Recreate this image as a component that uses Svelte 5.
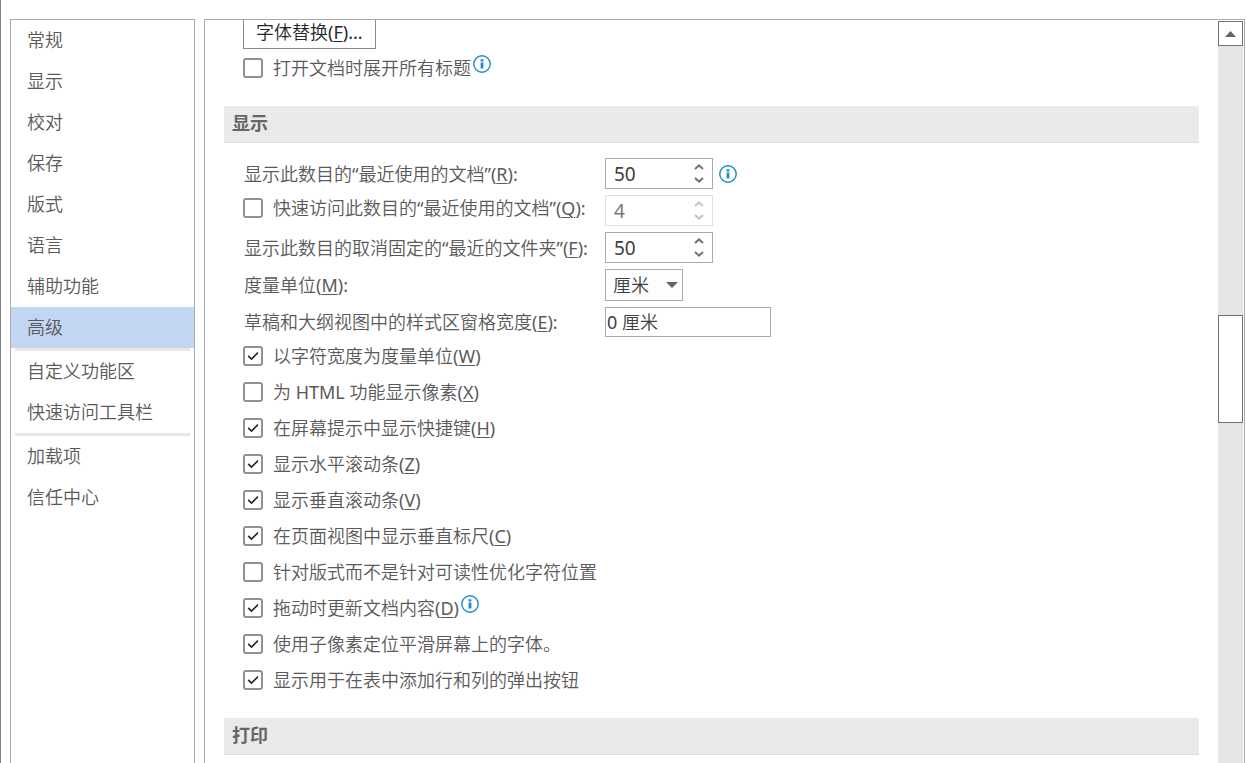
<script>
	const navGroups = [
		['常规', '显示', '校对', '保存', '版式', '语言', '辅助功能', '高级'],
		['自定义功能区', '快速访问工具栏'],
		['加载项', '信任中心']
	];

	let active = $state('高级');
	let expandHeadings = $state(false);
	let recentDocs = $state(50);
	let quickAccess = $state(false);
	let quickDocs = $state(4);
	let recentFolders = $state(50);
	let unit = $state('厘米');
	let paneWidth = $state('0 厘米');

	let options = $state([
		{ text: '以字符宽度为度量单位', key: 'W', checked: true },
		{ text: '为 HTML 功能显示像素', key: 'X', checked: false },
		{ text: '在屏幕提示中显示快捷键', key: 'H', checked: true },
		{ text: '显示水平滚动条', key: 'Z', checked: true },
		{ text: '显示垂直滚动条', key: 'V', checked: true },
		{ text: '在页面视图中显示垂直标尺', key: 'C', checked: true },
		{ text: '针对版式而不是针对可读性优化字符位置', checked: false },
		{ text: '拖动时更新文档内容', key: 'D', checked: true, info: true },
		{ text: '使用子像素定位平滑屏幕上的字体。', checked: true },
		{ text: '显示用于在表中添加行和列的弹出按钮', checked: true }
	]);

	// Scroll position and visible share, in percent of the track
	const scroll = { top: 37.5, size: 15.1 };
</script>

{#snippet infoIcon()}
	<svg class="info" viewBox="0 0 18 18" width="18" height="18" role="img" aria-label="信息">
		<circle cx="9" cy="9" r="8.2" fill="#fff" stroke="#1e8bcd" stroke-width="1.4" />
		<path d="M7.6 4.2h2.8v2.2H7.6zM7.6 7.6h2.8v6H7.6z" fill="#1e8bcd" />
	</svg>
{/snippet}

{#snippet checkMark()}
	<svg class="mark" viewBox="0 0 20 20" width="20" height="20" aria-hidden="true">
		<path d="M5.2 9.8l3.3 3.3 6.4-6.4" fill="none" stroke="#262626" stroke-width="1.7" />
	</svg>
{/snippet}

{#snippet spinner(id, value, disabled, set)}
	<div class="spinner" class:disabled>
		<input {id} type="number" min="0" {value} {disabled} oninput={(e) => set(+e.target.value)} />
		<div class="arrows">
			<button aria-label="增加" {disabled} onclick={() => set(value + 1)}>
				<svg viewBox="0 0 10 6" width="10" height="6"><path d="M1 5l4-3.6L9 5" /></svg>
			</button>
			<button aria-label="减少" {disabled} onclick={() => set(Math.max(0, value - 1))}>
				<svg viewBox="0 0 10 6" width="10" height="6"><path d="M1 1l4 3.6L9 1" /></svg>
			</button>
		</div>
	</div>
{/snippet}

<div class="dialog">
	<nav class="sidebar">
		{#each navGroups as group}
			<div class="group">
				{#each group as item}
					<button class="nav-item" class:active={item === active} onclick={() => (active = item)}>
						{item}
					</button>
				{/each}
			</div>
		{/each}
	</nav>

	<div class="panel">
		<main class="content">
			<button class="font-button">字体替换(<u>F</u>)...</button>
			<div class="check-row">
				<label>
					<span class="box">
						<input type="checkbox" bind:checked={expandHeadings} />
						{@render checkMark()}
					</span>
					<span>打开文档时展开所有标题</span>
				</label>
				<span class="raised">{@render infoIcon()}</span>
			</div>

			<h2>显示</h2>
			<div class="fields">
				<label for="recent-docs">显示此数目的“最近使用的文档”(<u>R</u>):</label>
				<div class="control">
					{@render spinner('recent-docs', recentDocs, false, (v) => (recentDocs = v))}
					{@render infoIcon()}
				</div>

				<label class="with-box">
					<span class="box">
						<input type="checkbox" bind:checked={quickAccess} />
						{@render checkMark()}
					</span>
					<span>快速访问此数目的“最近使用的文档”(<u>Q</u>):</span>
				</label>
				<div class="control">
					{@render spinner('quick-docs', quickDocs, !quickAccess, (v) => (quickDocs = v))}
				</div>

				<label for="recent-folders">显示此数目的取消固定的“最近的文件夹”(<u>F</u>):</label>
				<div class="control">
					{@render spinner('recent-folders', recentFolders, false, (v) => (recentFolders = v))}
				</div>

				<label for="unit">度量单位(<u>M</u>):</label>
				<div class="control">
					<div class="select">
						<select id="unit" bind:value={unit}>
							<option>厘米</option>
							<option>英寸</option>
							<option>毫米</option>
							<option>磅</option>
						</select>
						<svg viewBox="0 0 12 6" width="12" height="6" aria-hidden="true">
							<path d="M0 0h12L6 6z" fill="#666" />
						</svg>
					</div>
				</div>

				<label for="pane-width">草稿和大纲视图中的样式区窗格宽度(<u>E</u>):</label>
				<div class="control">
					<input id="pane-width" class="text" type="text" bind:value={paneWidth} />
				</div>
			</div>

			{#each options as option}
				<div class="check-row">
					<label>
						<span class="box">
							<input type="checkbox" bind:checked={option.checked} />
							{@render checkMark()}
						</span>
						<span>{option.text}{#if option.key}(<u>{option.key}</u>){/if}</span>
					</label>
					{#if option.info}
						<span class="raised">{@render infoIcon()}</span>
					{/if}
				</div>
			{/each}

			<h2>打印</h2>
		</main>

		<div class="scrollbar">
			<button class="scroll-up" aria-label="向上滚动">
				<svg viewBox="0 0 11 6" width="11" height="6"><path d="M0 6h11L5.5 0z" fill="#666" /></svg>
			</button>
			<div class="track">
				<div class="thumb" style="top: {scroll.top}%; height: {scroll.size}%"></div>
			</div>
		</div>
	</div>
</div>

<style>
	:global(body) {
		background: #fff;
	}

	.dialog {
		display: flex;
		gap: 9px;
		height: 100vh;
		box-sizing: border-box;
		padding: 19px 1px 0 9px;
		border-left: 1px solid #808080;
		overflow: hidden;
		color: #5a5a5a;
		font-family: 'Noto Sans', 'Noto Sans CJK SC DemiLight', 'Noto Sans CJK SC', sans-serif;
		font-size: 18px;
		line-height: 24px;
	}

	button,
	input,
	select {
		margin: 0;
		padding: 0;
		border: 0;
		border-radius: 0;
		background: none;
		color: inherit;
		font: inherit;
	}

	u {
		text-decoration-thickness: 1px;
		text-underline-offset: 2px;
	}

	svg {
		display: block;
		flex: none;
	}

	.sidebar {
		flex: none;
		width: 183px;
		border: 1px solid #ababab;
		border-bottom: 0;
	}

	.group + .group::before {
		content: '';
		display: block;
		height: 3px;
		margin: 0 4px;
		background: #e6e6e6;
	}

	.nav-item {
		display: block;
		width: 100%;
		height: 41px;
		padding: 0 0 2px 16px;
		text-align: left;
	}

	.nav-item.active {
		background: #c2d5f2;
	}

	.panel {
		display: flex;
		flex: 1;
		min-width: 0;
		border: 1px solid #ababab;
		border-bottom: 0;
	}

	.content {
		flex: 1;
		min-width: 0;
		padding: 0 19px;
		overflow: hidden;
	}

	.font-button {
		display: block;
		height: 35px;
		margin: -6px 0 1px 19px;
		padding: 0 12px;
		border: 1px solid #8a8a8a;
		color: #262626;
	}

	h2 {
		height: 36px;
		margin: 20px 0 15px;
		padding-left: 8px;
		border-bottom: 1px solid #dedede;
		background: #eaeaea;
		color: #666;
		font-family: 'Noto Sans', 'Noto Sans CJK SC', sans-serif;
		font-size: 18px;
		font-weight: 700;
		line-height: 34px;
	}

	.check-row {
		display: flex;
		align-items: center;
		height: 36px;
		padding-left: 19px;
	}

	label {
		display: flex;
		align-items: center;
		white-space: pre;
	}

	.box {
		display: grid;
		flex: none;
		width: 20px;
		height: 20px;
		margin-right: 10px;
	}

	.box input,
	.box .mark {
		grid-area: 1 / 1;
	}

	.box input {
		appearance: none;
		box-sizing: border-box;
		width: 20px;
		height: 20px;
		border: 2px solid #919191;
		border-radius: 3px;
	}

	.mark {
		visibility: hidden;
		pointer-events: none;
	}

	.box input:checked + .mark {
		visibility: visible;
	}

	.raised {
		align-self: flex-start;
		margin: 5px 0 0 2px;
	}

	.fields {
		display: grid;
		grid-template-columns: 361px 1fr;
		row-gap: 6px;
		padding: 0 0 1px 20px;
	}

	.fields .with-box {
		margin-left: -1px;
		padding-bottom: 5px;
	}

	.control {
		display: flex;
		align-items: center;
		gap: 6px;
		color: #404040;
	}

	.spinner {
		display: flex;
		box-sizing: border-box;
		width: 108px;
		height: 31px;
		border: 1px solid #ababab;
		font-size: 19px;
	}

	.spinner input {
		flex: 1;
		min-width: 0;
		padding-left: 8px;
		appearance: textfield;
	}

	.spinner input::-webkit-inner-spin-button {
		appearance: none;
		margin: 0;
	}

	.arrows {
		display: flex;
		flex-direction: column;
		justify-content: center;
		gap: 7px;
		width: 26px;
	}

	.arrows button {
		display: flex;
		justify-content: center;
	}

	.arrows path {
		fill: none;
		stroke: #737373;
		stroke-width: 2;
	}

	.spinner.disabled {
		border-color: #e0e0e0;
		color: #777;
	}

	.spinner.disabled path {
		stroke: #c4c4c4;
	}

	.select {
		display: grid;
		align-items: center;
		background: #fdfdfd;
	}

	.select select,
	.select svg {
		grid-area: 1 / 1;
	}

	.select select {
		appearance: none;
		box-sizing: border-box;
		width: 78px;
		height: 32px;
		padding-left: 7px;
		border: 1px solid #ababab;
	}

	.select svg {
		justify-self: end;
		margin-right: 5px;
		pointer-events: none;
	}

	.text {
		box-sizing: border-box;
		width: 166px;
		height: 30px;
		padding: 0 0 2px 1px;
		border: 1px solid #ababab;
	}

	.scrollbar {
		display: flex;
		flex: none;
		flex-direction: column;
		width: 25px;
		margin: 1px 1px 0 0;
	}

	.scroll-up {
		display: flex;
		align-items: center;
		justify-content: center;
		height: 25px;
		border: 1px solid #737373;
		background: #fff;
	}

	.track {
		position: relative;
		flex: 1;
		background: #e5e5e5;
	}

	.thumb {
		position: absolute;
		left: 0;
		right: 0;
		box-sizing: border-box;
		border: 1px solid #737373;
		background: #fff;
	}
</style>
